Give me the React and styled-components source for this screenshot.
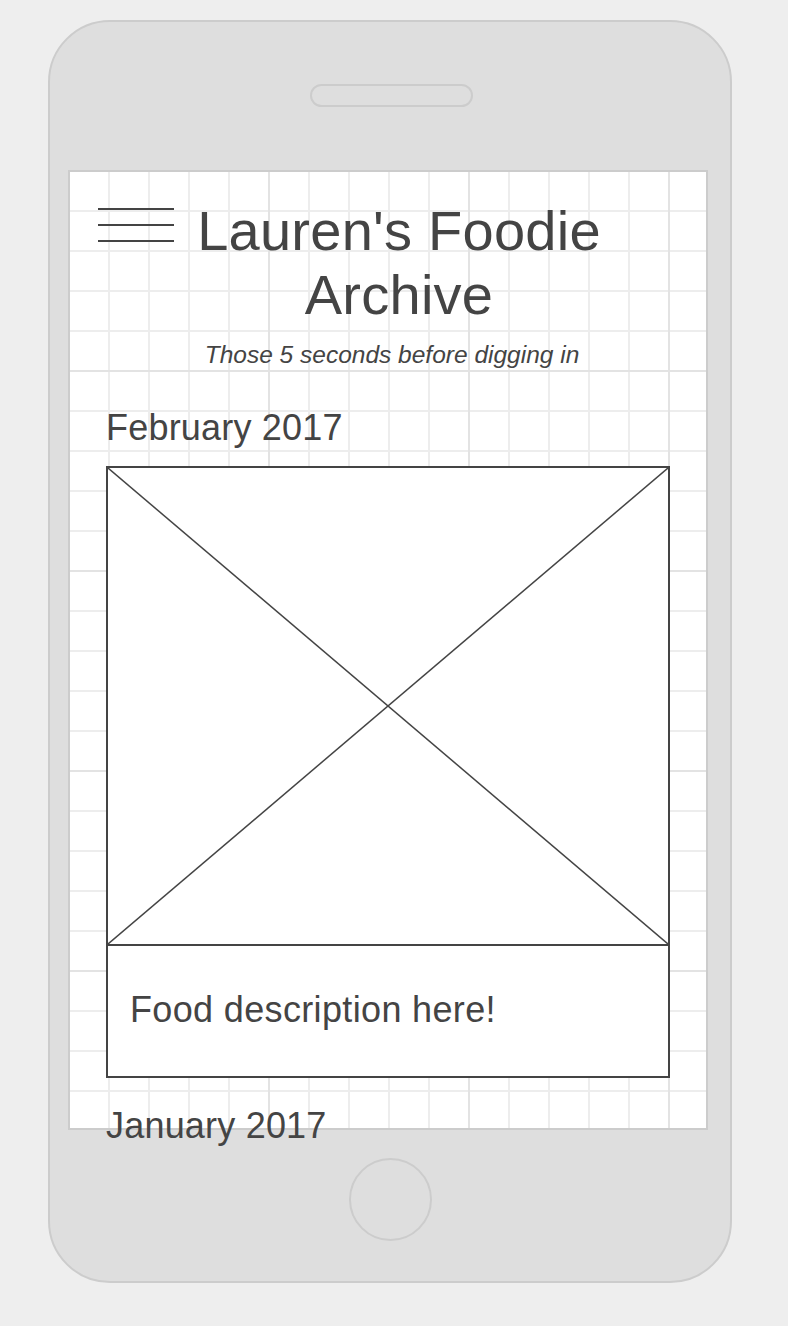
import styled, { createGlobalStyle } from 'styled-components'

const GlobalStyle = createGlobalStyle`
  html, body {
    margin: 0;
    padding: 0;
    background: #eeeeee;
  }
  body {
    font-family: "Liberation Sans", Arial, Helvetica, sans-serif;
    color: #444;
  }
  * { box-sizing: border-box; }
`;

const entries = [
  { month: 'February 2017', text: 'Food description here!', card: true },
  { month: 'January 2017', card: false },
];

const App = () => {
  return (
    <>
      <GlobalStyle />
      <Phone>
        <Speaker />
        <Screen>
          <Header>
            <Burger aria-label="menu">
              <span />
              <span />
              <span />
            </Burger>
            <Title>Lauren's Foodie Archive</Title>
          </Header>
          <Tagline>Those 5 seconds before digging in</Tagline>
          <Feed>
            {entries.map((entry) => (
              <Entry key={entry.month}>
                <Month>{entry.month}</Month>
                {entry.card && (
                  <Card>
                    <Placeholder>
                      <svg viewBox="0 0 560 476" preserveAspectRatio="none">
                        <line x1="0" y1="0" x2="560" y2="476" />
                        <line x1="560" y1="0" x2="0" y2="476" />
                      </svg>
                    </Placeholder>
                    <Description>{entry.text}</Description>
                  </Card>
                )}
              </Entry>
            ))}
          </Feed>
        </Screen>
        <HomeButton />
      </Phone>
    </>
  )
}

export default App


const Phone = styled.div`
  margin: 20px 0 0 48px;
  width: 684px;
  height: 1263px;
  background: #dedede;
  border: 2px solid #cccccc;
  border-radius: 62px;
  display: flex;
  flex-direction: column;
  align-items: center;
`;

const Speaker = styled.div`
  margin-top: 62px;
  margin-left: 3px;
  width: 163px;
  height: 23px;
  border: 2px solid #cccccc;
  border-radius: 12px;
`;

const Screen = styled.div`
  margin-top: 63px;
  margin-right: 4px;
  width: 640px;
  height: 960px;
  flex-shrink: 0;
  border: 2px solid #cccccc;
  background-color: #fff;
  background-image:
    linear-gradient(to right, transparent 198px, #e3e3e3 198px, #e3e3e3 200px, transparent 200px),
    linear-gradient(to bottom, transparent 198px, #e3e3e3 198px, #e3e3e3 200px, transparent 200px),
    linear-gradient(to right, transparent 38px, #ededed 38px, #ededed 40px, transparent 40px),
    linear-gradient(to bottom, transparent 38px, #ededed 38px, #ededed 40px, transparent 40px);
  background-size: 200px 200px, 200px 200px, 40px 40px, 40px 40px;
  background-origin: padding-box;
`;

const Header = styled.header`
  display: flex;
  align-items: flex-start;
  padding: 27px 82px 0 28px;
`;

const Burger = styled.div`
  margin-top: 9px;
  width: 76px;
  display: flex;
  flex-direction: column;
  gap: 14px;
  flex-shrink: 0;

  span {
    display: block;
    height: 2px;
    background: #444;
  }
`;

const Title = styled.h1`
  flex: 1;
  margin: 0;
  font-size: 56px;
  line-height: 64px;
  font-weight: normal;
  letter-spacing: 0.25px;
  text-align: center;
  color: #444;
`;

const Tagline = styled.p`
  margin: 14px 0 0;
  padding-left: 8px;
  font-size: 24.5px;
  line-height: 28px;
  font-style: italic;
  text-align: center;
  color: #444;
`;

const Feed = styled.section`
  margin-top: 38px;
  padding: 0 34px 0 36px;
`;

const Entry = styled.article`
  margin-bottom: 27px;
`;

const Month = styled.h2`
  margin: 0 0 17px;
  font-size: 36px;
  line-height: 42px;
  font-weight: normal;
  letter-spacing: 0.2px;
  color: #444;
`;

const Card = styled.div`
  width: 564px;
  border: 2px solid #444;
  background: #fff;
`;

const Placeholder = styled.div`
  height: 476px;

  svg {
    display: block;
    width: 100%;
    height: 100%;
  }

  line {
    stroke: #444;
    stroke-width: 1.5;
  }
`;

const Description = styled.p`
  margin: 0;
  border-top: 2px solid #444;
  padding: 43px 22px 45px;
  font-size: 36px;
  line-height: 42px;
  letter-spacing: 0.35px;
  color: #444;
`;

const HomeButton = styled.div`
  margin-top: 28px;
  width: 83px;
  height: 83px;
  border: 2px solid #cccccc;
  border-radius: 50%;
`;
